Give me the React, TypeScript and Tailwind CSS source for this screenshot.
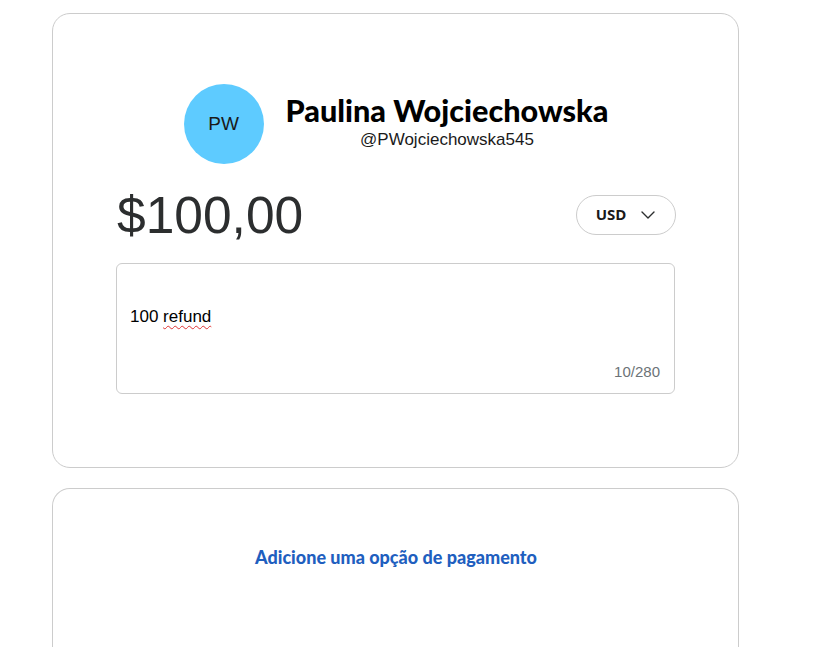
import React from "react";

const ChevronDown = () => (
  <svg width="16" height="16" viewBox="0 0 16 16" fill="none">
    <path d="M2 5l6 6 6-6" stroke="#2c2e2f" strokeWidth="1.4" strokeLinecap="round" strokeLinejoin="round" />
  </svg>
);

export default function App() {
  return (
    <div className="h-screen overflow-hidden bg-white pt-[13px] pl-[52px]" style={{ fontFamily: "'Liberation Sans', Arial, sans-serif" }}>
      <div className="w-[687px] flex flex-col gap-[20px]">
        <div className="h-[455px] rounded-[18px] border border-[#cccccc] px-[63px] pt-[70px]">
          <div className="flex items-center justify-center gap-[22px] ml-[1px]">
            <div className="w-[80px] h-[80px] rounded-full bg-[#5ecbff] flex items-center justify-center text-[19px] text-[#1a1a1a]">
              PW
            </div>
            <div className="flex flex-col items-center -mt-[6px]">
              <div className="text-[30.6px] font-black leading-[38px] text-black" style={{ fontFamily: "Lato, sans-serif" }}>
                Paulina Wojciechowska
              </div>
              <div className="text-[17px] leading-[20px] text-[#1a1a1a]">@PWojciechowska545</div>
            </div>
          </div>
          <div className="flex items-center justify-between mt-[22px]">
            <div className="text-[51.5px] leading-[58px] text-[#2c2e2f] ml-[1px]">$100,00</div>
            <div className="w-[100px] h-[40px] rounded-full border border-[#cccccc] flex items-center justify-center gap-[14px] mt-[-1px] mr-[-1px]">
              <span className="text-[15px] font-bold text-[#1a1a1a]" style={{ fontFamily: "'Open Sans', sans-serif" }}>USD</span>
              <ChevronDown />
            </div>
          </div>
          <div className="relative mt-[19px] h-[131px] rounded-[6px] border border-[#cccccc]">
            <div className="absolute left-[13px] top-[40px] text-[17px] text-black">
              100 <span className="underline decoration-wavy decoration-[#d33] underline-offset-[3px] decoration-[1px]">refund</span>
            </div>
            <div className="absolute right-[14px] bottom-[10px] text-[15px] text-[#6c7378]">10/280</div>
          </div>
        </div>
        <div className="h-[200px] rounded-t-[18px] border border-b-0 border-[#cccccc] pt-[55px] flex justify-center">
          <div className="text-[18px] font-black text-[#1f5fbf] ml-[1px]" style={{ fontFamily: "Lato, sans-serif" }}>
            Adicione uma opção de pagamento
          </div>
        </div>
      </div>
    </div>
  );
}
